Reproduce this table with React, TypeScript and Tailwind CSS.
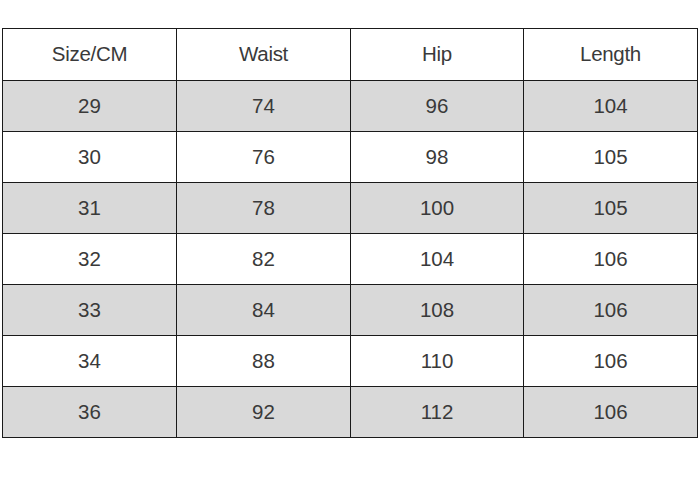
export default function App() {
  const header = ["Size/CM", "Waist", "Hip", "Length"];
  const rows = [
    ["29", "74", "96", "104"],
    ["30", "76", "98", "105"],
    ["31", "78", "100", "105"],
    ["32", "82", "104", "106"],
    ["33", "84", "108", "106"],
    ["34", "88", "110", "106"],
    ["36", "92", "112", "106"],
  ];
  return (
    <div className="w-[700px] h-[483px] bg-white pt-[28px] pl-[2px]" style={{ fontFamily: '"Liberation Sans", Arial, sans-serif' }}>
      <table className="border-collapse table-fixed w-[696px] text-[20.5px] text-[#3a3a3a]">
        <colgroup>
          <col className="w-[174px]" />
          <col className="w-[174px]" />
          <col className="w-[173px]" />
          <col className="w-[174px]" />
        </colgroup>
        <thead>
          <tr className="h-[52px] bg-white">
            {header.map((h) => (
              <td key={h} className="border border-[#1a1a1a] text-center align-middle p-0 tracking-[-0.3px]">{h}</td>
            ))}
          </tr>
        </thead>
        <tbody>
          {rows.map((r, i) => (
            <tr key={i} className={`h-[51px] ${i % 2 === 0 ? "bg-[#d9d9d9]" : "bg-white"}`}>
              {r.map((c, j) => (
                <td key={j} className="border border-[#1a1a1a] text-center align-middle p-0 pt-[1px]">{c}</td>
              ))}
            </tr>
          ))}
        </tbody>
      </table>
    </div>
  );
}
